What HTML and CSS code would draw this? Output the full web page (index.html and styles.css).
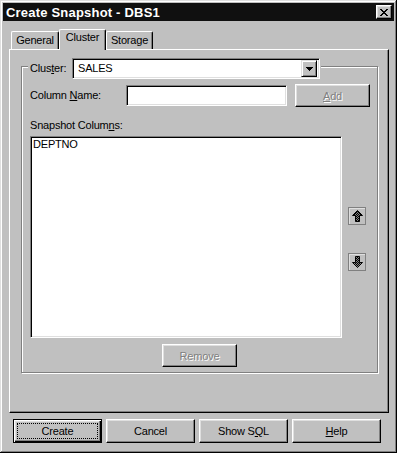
FILE: index.html
```html
<!DOCTYPE html>
<html lang="en">
  <head>
    <meta charset="UTF-8" />
    <title>Create Snapshot - DBS1</title>
    <link rel="stylesheet" href="styles.css">
  </head>
  <body>
    <div class="window">
      <div class="titlebar">
        <span class="title">Create Snapshot - DBS1</span>
        <button class="close" type="button">
          <svg width="8" height="7" viewBox="0 0 8 7" shape-rendering="crispEdges">
            <path fill="#000" d="M0 0h2v1H0zM6 0h2v1H6zM1 1h2v1H1zM5 1h2v1H5zM2 2h4v1H2zM3 3h2v1H3zM2 4h4v1H2zM1 5h2v1H1zM5 5h2v1H5zM0 6h2v1H0zM6 6h2v1H6z"/>
          </svg>
        </button>
      </div>

      <div class="content">
        <div class="tabs">
          <div class="tab">General</div>
          <div class="tab active">Cluster</div>
          <div class="tab">Storage</div>
        </div>

        <div class="panel">
          <div class="group">
            <div class="group-head">
              <label class="head-label">Clus<u>t</u>er:</label>
              <div class="field combo">
                <span class="combo-text">SALES</span>
                <span class="drop-btn">
                  <svg width="7" height="4" viewBox="0 0 7 4" shape-rendering="crispEdges">
                    <path fill="#000" d="M0 0h7v1H0zM1 1h5v1H1zM2 2h3v1H2zM3 3h1v1H3z"/>
                  </svg>
                </span>
              </div>
            </div>

            <div class="name-row">
              <label class="name-label">Column <u>N</u>ame:</label>
              <div class="field name-field"></div>
              <button class="btn disabled add-btn" type="button"><u>A</u>dd</button>
            </div>

            <div class="list-label">Snapshot Colum<u>n</u>s:</div>
            <div class="list-row">
              <div class="field listbox">
                <div class="list-item">DEPTNO</div>
              </div>
              <div class="move-btns">
                <button class="move-btn" type="button">
                  <svg width="11" height="12" viewBox="0 0 11 12">
                    <defs>
                      <pattern id="chkUp" width="2" height="2" patternUnits="userSpaceOnUse">
                        <rect width="2" height="2" fill="#808080"/>
                        <rect width="1" height="1" fill="#000"/>
                        <rect x="1" y="1" width="1" height="1" fill="#000"/>
                      </pattern>
                    </defs>
                    <path d="M5.5 0.5L10.5 5.5H7.5V11.5H3.5V5.5H0.5Z" fill="url(#chkUp)" stroke="#000"/>
                  </svg>
                </button>
                <button class="move-btn" type="button">
                  <svg width="11" height="12" viewBox="0 0 11 12">
                    <defs>
                      <pattern id="chkDown" width="2" height="2" patternUnits="userSpaceOnUse">
                        <rect width="2" height="2" fill="#808080"/>
                        <rect width="1" height="1" fill="#000"/>
                        <rect x="1" y="1" width="1" height="1" fill="#000"/>
                      </pattern>
                    </defs>
                    <path d="M5.5 11.5L10.5 6.5H7.5V0.5H3.5V6.5H0.5Z" fill="url(#chkDown)" stroke="#000"/>
                  </svg>
                </button>
              </div>
            </div>

            <button class="btn disabled remove-btn" type="button">Remove</button>
          </div>
        </div>

        <div class="actions">
          <button class="btn action default" type="button"><span class="focus">Create</span></button>
          <button class="btn action" type="button">Cancel</button>
          <button class="btn action" type="button">Show S<u>Q</u>L</button>
          <button class="btn action" type="button"><u>H</u>elp</button>
        </div>
      </div>
    </div>
  </body>
</html>
```

FILE: styles.css
```css
body {
  margin: 0;
  background-color: #c0c0c0;
  font-family: "Liberation Sans", Arial, sans-serif;
  font-size: 11px;
  letter-spacing: -0.2px;
  color: #000;
}
button {
  font: inherit;
  letter-spacing: inherit;
  color: inherit;
  margin: 0;
  padding: 0;
  background-color: #c0c0c0;
  cursor: default;
}
u {
  text-decoration-thickness: 1px;
  text-underline-offset: 1px;
}

.window {
  box-sizing: border-box;
  width: 397px;
  height: 453px;
  padding: 3px;
  background-color: #c0c0c0;
  box-shadow: inset -1px -1px #000, inset 1px 1px #dfdfdf,
    inset -2px -2px #808080, inset 2px 2px #fff;
}
.titlebar {
  height: 18px;
  display: flex;
  align-items: center;
  justify-content: space-between;
  padding: 0 2px 0 3px;
  background-color: #101010;
}
.title {
  color: #fff;
  font-weight: bold;
  font-size: 13px;
  letter-spacing: 0.2px;
  line-height: 15px;
}
.close {
  box-sizing: border-box;
  width: 16px;
  height: 14px;
  display: flex;
  align-items: center;
  justify-content: center;
  border: 1px solid;
  border-color: #fff #000 #000 #fff;
  box-shadow: inset -1px -1px #808080, inset 1px 1px #dfdfdf;
}

.content {
  padding: 8px 0 0 6px;
}
.tabs {
  display: flex;
  align-items: flex-end;
  height: 20px;
  padding-left: 2px;
}
.tab {
  box-sizing: border-box;
  width: 47px;
  height: 18px;
  padding-top: 2px;
  line-height: 13px;
  text-align: center;
  border-style: solid;
  border-width: 1px 1px 0 1px;
  border-color: #fff #000 #fff #fff;
  border-radius: 2px 2px 0 0;
  box-shadow: inset -1px 0 #808080;
  background-color: #c0c0c0;
}
.tab:first-child {
  width: 48px;
}
.tab.active {
  height: 21px;
  margin-bottom: -1px;
  padding-top: 1px;
  position: relative;
  z-index: 1;
}

.panel {
  box-sizing: border-box;
  width: 380px;
  height: 364px;
  padding: 16px 0 0 11px;
  border: 1px solid;
  border-color: #fff #000 #000 #fff;
  box-shadow: inset -1px -1px #808080;
}
.group {
  box-sizing: border-box;
  width: 357px;
  height: 307px;
  padding-left: 8px;
  border: 1px solid #808080;
  box-shadow: inset 1px 1px #fff, 1px 1px #fff;
}
.group-head {
  display: flex;
  align-items: center;
  width: fit-content;
  margin: -9px 0 0 -2px;
  padding: 0 1px 0 2px;
  background-color: #c0c0c0;
}
.head-label {
  width: 42px;
  line-height: 13px;
}

.field {
  box-sizing: border-box;
  background-color: #fff;
  border: 1px solid;
  border-color: #808080 #fff #fff #808080;
  box-shadow: inset 1px 1px #000, inset -1px -1px #dfdfdf;
}
.combo {
  width: 248px;
  height: 21px;
  padding: 2px;
  display: flex;
  align-items: center;
  justify-content: space-between;
}
.combo-text {
  padding-left: 3px;
  line-height: 13px;
}
.drop-btn {
  box-sizing: border-box;
  width: 16px;
  height: 17px;
  display: flex;
  align-items: center;
  justify-content: center;
  background-color: #c0c0c0;
  border: 1px solid;
  border-color: #dfdfdf #000 #000 #dfdfdf;
  box-shadow: inset 1px 1px #fff, inset -1px -1px #808080;
}

.name-row {
  display: flex;
  align-items: center;
  height: 23px;
  margin-top: 5px;
}
.name-label {
  width: 96px;
  line-height: 13px;
}
.name-field {
  width: 161px;
  height: 21px;
}

.btn {
  box-sizing: border-box;
  height: 23px;
  border: 1px solid;
  border-color: #fff #000 #000 #fff;
  box-shadow: inset -1px -1px #808080, inset 1px 1px #dfdfdf;
}
.btn.disabled {
  color: #808080;
  text-shadow: 1px 1px 0 #fff;
}
.add-btn {
  width: 75px;
  margin-left: 8px;
}

.list-label {
  margin-top: 12px;
  line-height: 13px;
}
.list-row {
  display: flex;
  margin-top: 4px;
}
.listbox {
  width: 312px;
  height: 202px;
  padding: 1px 2px;
}
.list-item {
  line-height: 13px;
}
.move-btns {
  display: flex;
  flex-direction: column;
  gap: 28px;
  margin-left: 6px;
  padding-top: 71px;
}
.move-btn {
  box-sizing: border-box;
  width: 18px;
  height: 18px;
  display: flex;
  align-items: center;
  justify-content: center;
  border: 1px solid #808080;
  box-shadow: inset 1px 1px #dfdfdf;
}

.remove-btn {
  display: block;
  width: 75px;
  margin: 6px 0 0 132px;
}

.actions {
  display: flex;
  gap: 4px;
  margin-top: 6px;
  padding-left: 4px;
}
.action {
  width: 89px;
  height: 24px;
}
.default {
  display: flex;
  padding: 3px;
  border: 1px solid #000;
  box-shadow: inset 1px 1px #fff, inset -1px -1px #000,
    inset -2px -2px #808080, inset 2px 2px #dfdfdf;
}
.focus {
  flex: 1;
  display: flex;
  align-items: center;
  justify-content: center;
  border: 1px dotted #000;
}
```
